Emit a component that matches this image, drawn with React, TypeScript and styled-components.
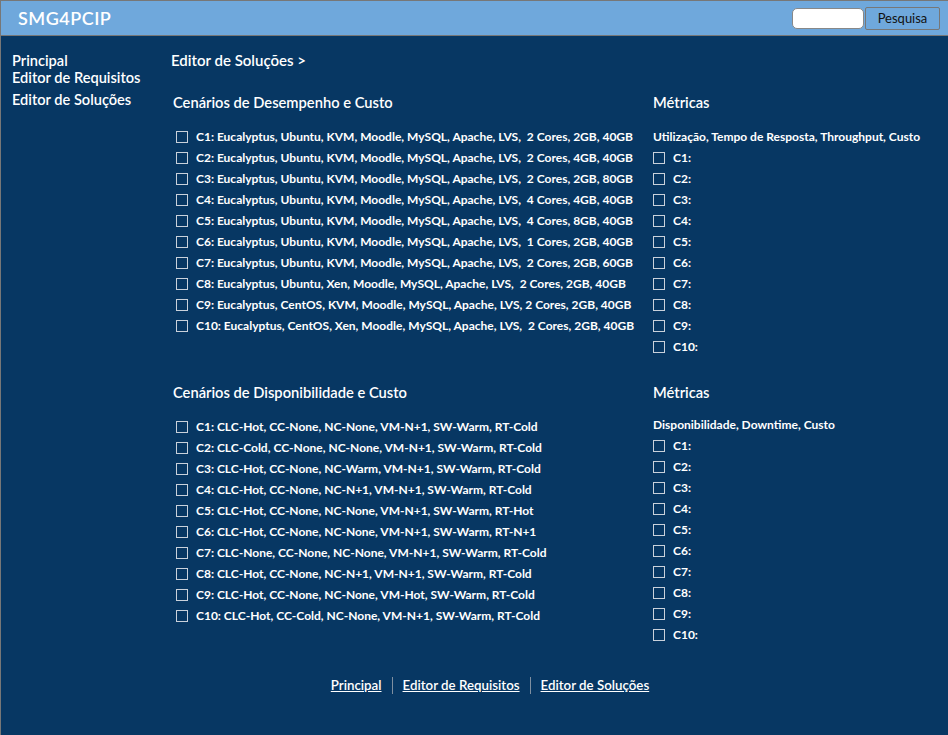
import React from "react";
import styled, { createGlobalStyle } from "styled-components";

const FONT = `"Lato", "Open Sans", sans-serif`;

const Global = createGlobalStyle`
  html, body { margin: 0; padding: 0; background: #073763; }
  body { font-family: ${FONT}; }
  * { box-sizing: border-box; }
`;

const Frame = styled.div`
  width: 948px;
  height: 735px;
  overflow: hidden;
  background: #073763;
  border-top: 1px solid #777;
  border-left: 1px solid #777;
  color: #fff;
  display: flex;
  flex-direction: column;
`;

const Header = styled.header`
  height: 35px;
  flex: none;
  background: #6fa8dc;
  border-bottom: 1px solid #777;
  display: flex;
  align-items: center;
  padding: 0 8px 0 17px;
`;

const Brand = styled.div`
  font-size: 18px;
  font-weight: 600;
  letter-spacing: 0.5px;
  color: #fff;
  flex: 1;
`;

const SearchInput = styled.input`
  width: 72px;
  height: 21px;
  border: 1px solid #888;
  border-radius: 5px;
  background: #fff;
  margin-right: 1px;
  outline: none;
`;

const SearchButton = styled.button`
  height: 23px;
  width: 75px;
  background: #6fa8dc;
  border: 1px solid #777;
  border-radius: 2px;
  font-family: ${FONT};
  font-size: 13px;
  color: #111;
  padding: 0;
`;

const Body = styled.div`
  display: flex;
  flex: 1;
`;

const Sidebar = styled.nav`
  width: 170px;
  flex: none;
  padding: 16px 0 0 11px;
  display: flex;
  flex-direction: column;
`;

const SideLink = styled.a<{ $gap?: number }>`
  display: block;
  color: #fff;
  text-decoration: none;
  font-size: 14.6px;
  font-weight: 600;
  line-height: 17px;
  margin-top: ${(p) => p.$gap ?? 0}px;
`;

const Main = styled.main`
  flex: 1;
  padding-top: 16px;
  display: flex;
  flex-direction: column;
`;

const Crumb = styled.div`
  font-size: 15px;
  font-weight: 600;
  line-height: 17px;
`;

const Section = styled.section<{ $top: number }>`
  display: grid;
  grid-template-columns: 480px 1fr;
  padding-left: 2px;
  margin-top: ${(p) => p.$top}px;
`;

const Column = styled.div`
  display: flex;
  flex-direction: column;
`;

const SectionTitle = styled.h2<{ $after?: number }>`
  margin: 0 0 ${(p) => p.$after ?? 14}px;
  font-size: 14.7px;
  font-weight: 600;
  line-height: 20px;
`;

const Row = styled.label<{ $indent?: number }>`
  display: flex;
  align-items: center;
  height: 21px;
  padding-left: ${(p) => p.$indent ?? 0}px;
  font-size: 12px;
  font-weight: 700;
  white-space: pre;
`;

const Box = styled.span`
  width: 12px;
  height: 12px;
  border: 1px solid #c9d1db;
  margin-right: 8px;
  flex: none;
`;

const Footer = styled.footer`
  margin-top: 32px;
  display: flex;
  justify-content: center;
  padding-right: 139px;
`;

const FootLink = styled.a<{ $sep?: boolean }>`
  color: #fff;
  font-size: 13.3px;
  font-weight: 600;
  line-height: 17px;
  text-decoration: underline;
  padding: 0 10px;
  border-left: ${(p) => (p.$sep ? "1px solid #7f8fa0" : "none")};
`;

const perf = [
  "C1: Eucalyptus, Ubuntu, KVM, Moodle, MySQL, Apache, LVS,  2 Cores, 2GB, 40GB",
  "C2: Eucalyptus, Ubuntu, KVM, Moodle, MySQL, Apache, LVS,  2 Cores, 4GB, 40GB",
  "C3: Eucalyptus, Ubuntu, KVM, Moodle, MySQL, Apache, LVS,  2 Cores, 2GB, 80GB",
  "C4: Eucalyptus, Ubuntu, KVM, Moodle, MySQL, Apache, LVS,  4 Cores, 4GB, 40GB",
  "C5: Eucalyptus, Ubuntu, KVM, Moodle, MySQL, Apache, LVS,  4 Cores, 8GB, 40GB",
  "C6: Eucalyptus, Ubuntu, KVM, Moodle, MySQL, Apache, LVS,  1 Cores, 2GB, 40GB",
  "C7: Eucalyptus, Ubuntu, KVM, Moodle, MySQL, Apache, LVS,  2 Cores, 2GB, 60GB",
  "C8: Eucalyptus, Ubuntu, Xen, Moodle, MySQL, Apache, LVS,  2 Cores, 2GB, 40GB",
  "C9: Eucalyptus, CentOS, KVM, Moodle, MySQL, Apache, LVS, 2 Cores, 2GB, 40GB",
  "C10: Eucalyptus, CentOS, Xen, Moodle, MySQL, Apache, LVS,  2 Cores, 2GB, 40GB",
];

const avail = [
  "C1: CLC-Hot, CC-None, NC-None, VM-N+1, SW-Warm, RT-Cold",
  "C2: CLC-Cold, CC-None, NC-None, VM-N+1, SW-Warm, RT-Cold",
  "C3: CLC-Hot, CC-None, NC-Warm, VM-N+1, SW-Warm, RT-Cold",
  "C4: CLC-Hot, CC-None, NC-N+1, VM-N+1, SW-Warm, RT-Cold",
  "C5: CLC-Hot, CC-None, NC-None, VM-N+1, SW-Warm, RT-Hot",
  "C6: CLC-Hot, CC-None, NC-None, VM-N+1, SW-Warm, RT-N+1",
  "C7: CLC-None, CC-None, NC-None, VM-N+1, SW-Warm, RT-Cold",
  "C8: CLC-Hot, CC-None, NC-N+1, VM-N+1, SW-Warm, RT-Cold",
  "C9: CLC-Hot, CC-None, NC-None, VM-Hot, SW-Warm, RT-Cold",
  "C10: CLC-Hot, CC-Cold, NC-None, VM-N+1, SW-Warm, RT-Cold",
];

const metricIds = Array.from({ length: 10 }, (_, i) => `C${i + 1}:`);

function ScenarioBlock({
  title,
  items,
  metricsLabel,
  top,
  metricsGap = 14,
}: {
  title: string;
  items: string[];
  metricsLabel: string;
  top: number;
  metricsGap?: number;
}) {
  return (
    <Section $top={top}>
      <Column>
        <SectionTitle>{title}</SectionTitle>
        {items.map((t) => (
          <Row key={t} $indent={3}>
            <Box />
            {t}
          </Row>
        ))}
      </Column>
      <Column>
        <SectionTitle $after={metricsGap}>Métricas</SectionTitle>
        <Row>{metricsLabel}</Row>
        {metricIds.map((m) => (
          <Row key={m}>
            <Box />
            {m}
          </Row>
        ))}
      </Column>
    </Section>
  );
}

export default function App() {
  return (
    <>
      <Global />
      <Frame>
        <Header>
          <Brand>SMG4PCIP</Brand>
          <SearchInput />
          <SearchButton>Pesquisa</SearchButton>
        </Header>
        <Body>
          <Sidebar>
            <SideLink>Principal</SideLink>
            <SideLink>Editor de Requisitos</SideLink>
            <SideLink $gap={5}>Editor de Soluções</SideLink>
          </Sidebar>
          <Main>
            <Crumb>Editor de Soluções &gt;</Crumb>
            <ScenarioBlock
              top={23}
              title="Cenários de Desempenho e Custo"
              items={perf}
              metricsLabel="Utilização, Tempo de Resposta, Throughput, Custo"
            />
            <ScenarioBlock
              top={25}
              metricsGap={12}
              title="Cenários de Disponibilidade e Custo"
              items={avail}
              metricsLabel="Disponibilidade, Downtime, Custo"
            />
            <Footer>
              <FootLink>Principal</FootLink>
              <FootLink $sep>Editor de Requisitos</FootLink>
              <FootLink $sep>Editor de Soluções</FootLink>
            </Footer>
          </Main>
        </Body>
      </Frame>
    </>
  );
}
